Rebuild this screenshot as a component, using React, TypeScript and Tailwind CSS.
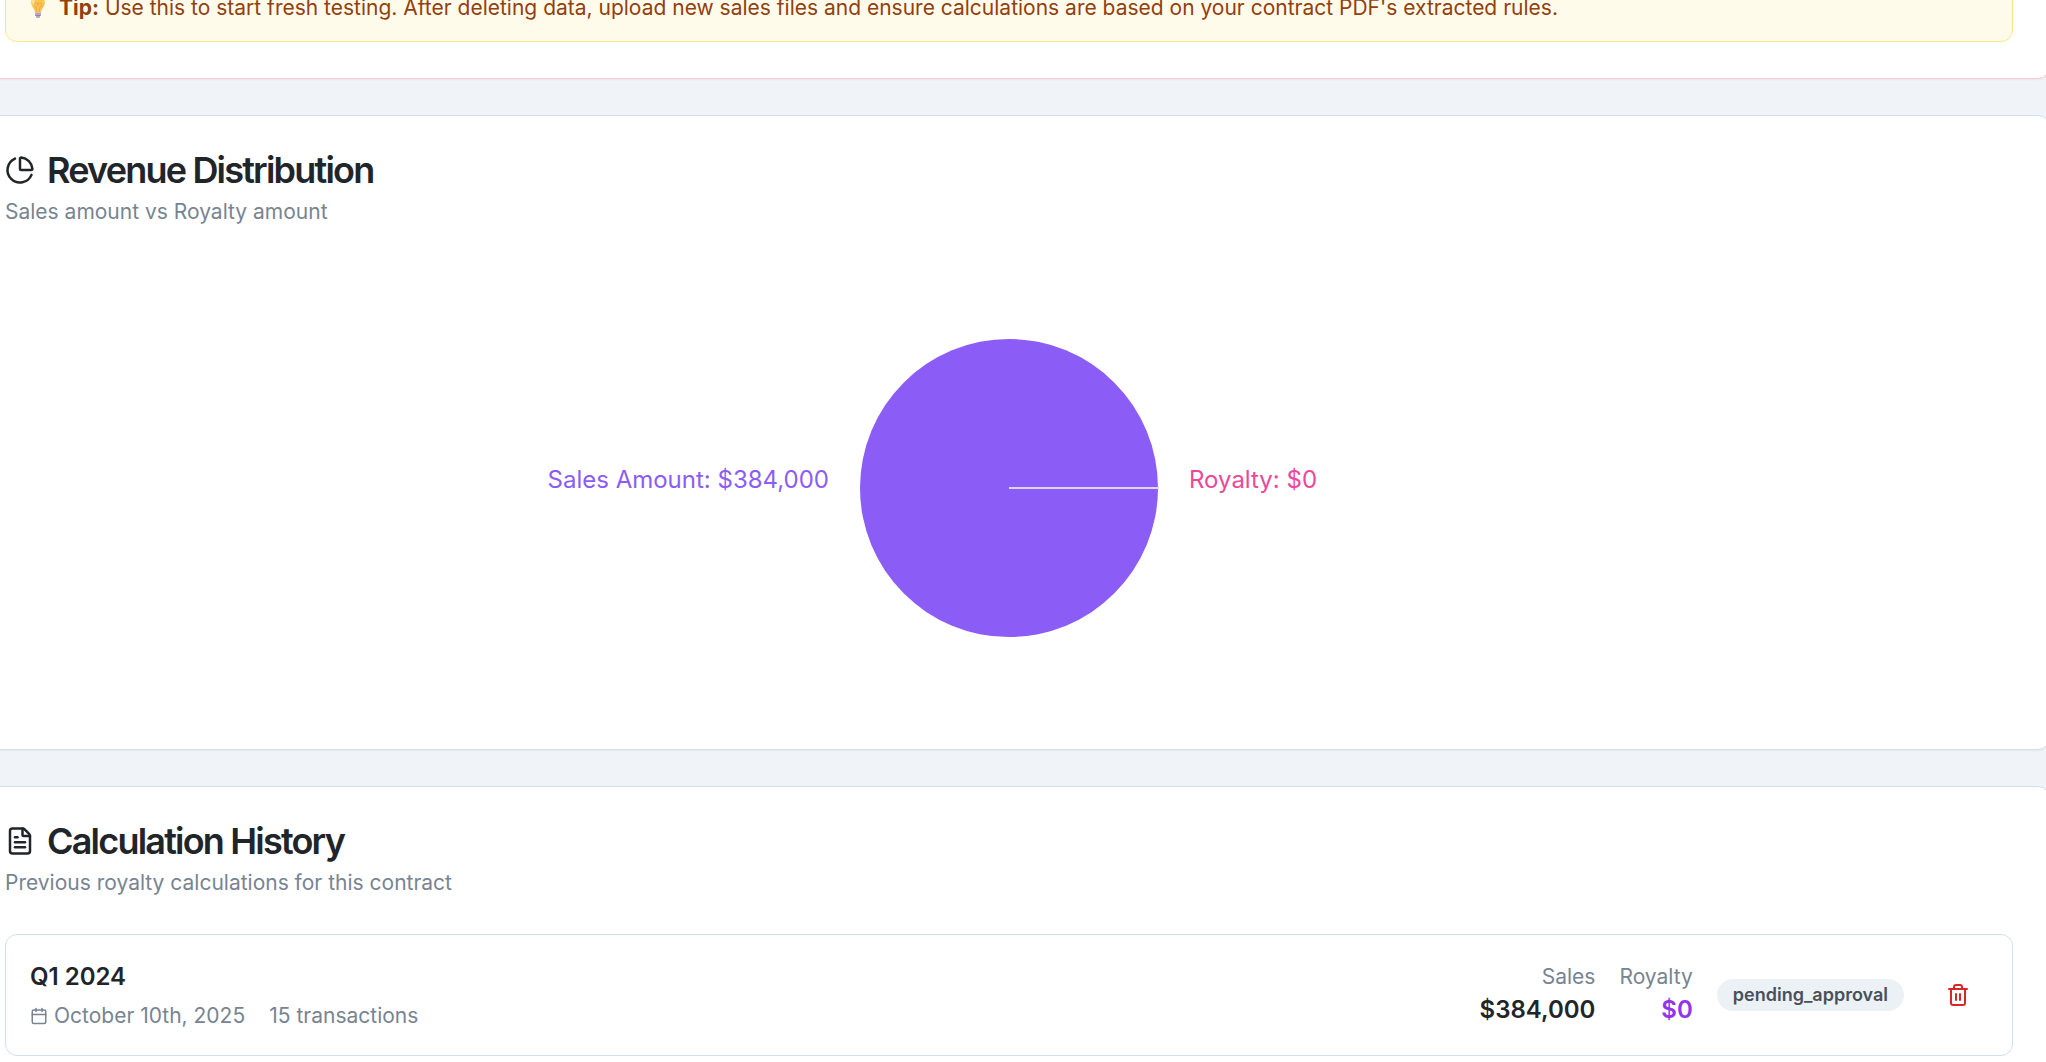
import type { ReactNode } from "react";
import { Calendar, ChartPie, FileText, Trash2 } from "lucide-react";

function LightBulb() {
  return (
    <svg viewBox="0 0 28 28" className="mr-[7px] size-7 shrink-0" role="img" aria-label="Light bulb">
      <path d="M14 1.500c-4.300 0-6.800 3.100-6.800 7 0 3.200 1.600 4.700 2.800 6.700.7 1.200.8 2.300 1 3.300h6c.2-1 .3-2.100 1-3.300 1.200-2 2.800-3.500 2.800-6.700 0-3.900-2.500-7-6.800-7Z" fill="#fcc550" />
      <path d="M10.500 3.500c-1.900 1.200-2.600 3.200-2.300 5.300.3 1.800 1.500 3.200 2.500 4.700Z" fill="#fee39a" />
      <path d="M12.800 18 12 13a2 2 0 1 1 2 -1.500 2 2 0 1 1 2 1.500l-.8 5" fill="none" stroke="#f5a742" strokeWidth="1" />
      <path d="M11 18.500h6v2h-6Z" fill="#b9a3c9" />
      <path d="M11.200 20.500h5.600v1.500h-5.600Z" fill="#9a7fb0" />
      <path d="M11.800 22h4.400l-.8 2h-2.800Z" fill="#b9a3c9" />
    </svg>
  );
}

function Card({
  title,
  description,
  icon,
  children,
}: {
  title: string;
  description: string;
  icon: ReactNode;
  children: ReactNode;
}) {
  return (
    <section className="rounded-xl border border-[#d1dfec] bg-white p-9 shadow-xs">
      <header className="mb-9 flex flex-col gap-[9px]">
        <h2 className="flex items-center gap-3 text-4xl leading-9 font-semibold tracking-tighter">
          {icon}
          {title}
        </h2>
        <p className="text-[21px] leading-[30px] text-[#788492]">{description}</p>
      </header>
      {children}
    </section>
  );
}

function RevenuePie() {
  return (
    <div className="flex h-[450px] items-center justify-center text-2xl leading-9">
      <div className="flex flex-1 justify-end pr-[30px] pb-4 text-[#8b5cf6]">Sales Amount: $384,000</div>
      <svg viewBox="0 0 300 300" className="size-[300px] shrink-0" aria-hidden="true">
        <circle cx="150" cy="150" r="149" fill="#8b5cf6" />
        <path d="M150 150H300" stroke="#e0d4fb" strokeWidth="2" />
      </svg>
      <div className="flex-1 pb-4 pl-[30px] text-[#ec4899]">Royalty: $0</div>
    </div>
  );
}

function Amount({ label, value, tone }: { label: string; value: string; tone: string }) {
  return (
    <div className="text-right">
      <p className="text-[21px] leading-[30px] text-[#788492]">{label}</p>
      <p className={`text-2xl leading-9 font-semibold ${tone}`}>{value}</p>
    </div>
  );
}

function CalculationRow() {
  return (
    <article className="flex items-center justify-between rounded-xl border border-[#d1dfec] p-6">
      <div className="flex flex-col gap-[6px]">
        <h3 className="text-2xl leading-9 font-semibold">Q1 2024</h3>
        <div className="flex items-center gap-6 text-[21px] leading-[30px] text-[#788492]">
          <span className="flex items-center gap-[6px]">
            <Calendar className="size-[18px]" />
            October 10th, 2025
          </span>
          <span>15 transactions</span>
        </div>
      </div>
      <div className="flex items-center gap-6">
        <Amount label="Sales" value="$384,000" tone="text-[#212529]" />
        <Amount label="Royalty" value="$0" tone="text-[#9333ea]" />
        <span className="rounded-full bg-[#ecf1f6] px-4 py-1 text-lg leading-6 font-semibold text-[#495057]">
          pending_approval
        </span>
        <button
          type="button"
          aria-label="Delete calculation"
          className="flex h-[54px] items-center rounded-lg px-[18px] text-[#dc2626] hover:bg-red-50"
        >
          <Trash2 className="size-6" />
        </button>
      </div>
    </article>
  );
}

export default function App() {
  return (
    <div className="h-screen overflow-hidden bg-[#f0f4f9] font-['Inter',sans-serif] text-[#212529]">
      <main className="-mt-[63px] -mr-1 -ml-8 flex flex-col gap-9">
        <section className="rounded-xl border border-[#fecaca] bg-white p-9 shadow-xs">
          <div className="rounded-xl border border-[#fde68a] bg-[#fffbeb] p-[18px]">
            <p className="flex items-center text-[21px] leading-[30px] text-[#92400e]">
              <LightBulb />
              <span>
                <strong className="font-bold">Tip:</strong> Use this to start fresh testing. After deleting data, upload
                new sales files and ensure calculations are based on your contract PDF's extracted rules.
              </span>
            </p>
          </div>
        </section>

        <Card
          title="Revenue Distribution"
          description="Sales amount vs Royalty amount"
          icon={<ChartPie className="size-[30px]" />}
        >
          <RevenuePie />
        </Card>

        <Card
          title="Calculation History"
          description="Previous royalty calculations for this contract"
          icon={<FileText className="size-[30px]" />}
        >
          <CalculationRow />
        </Card>
      </main>
    </div>
  );
}
